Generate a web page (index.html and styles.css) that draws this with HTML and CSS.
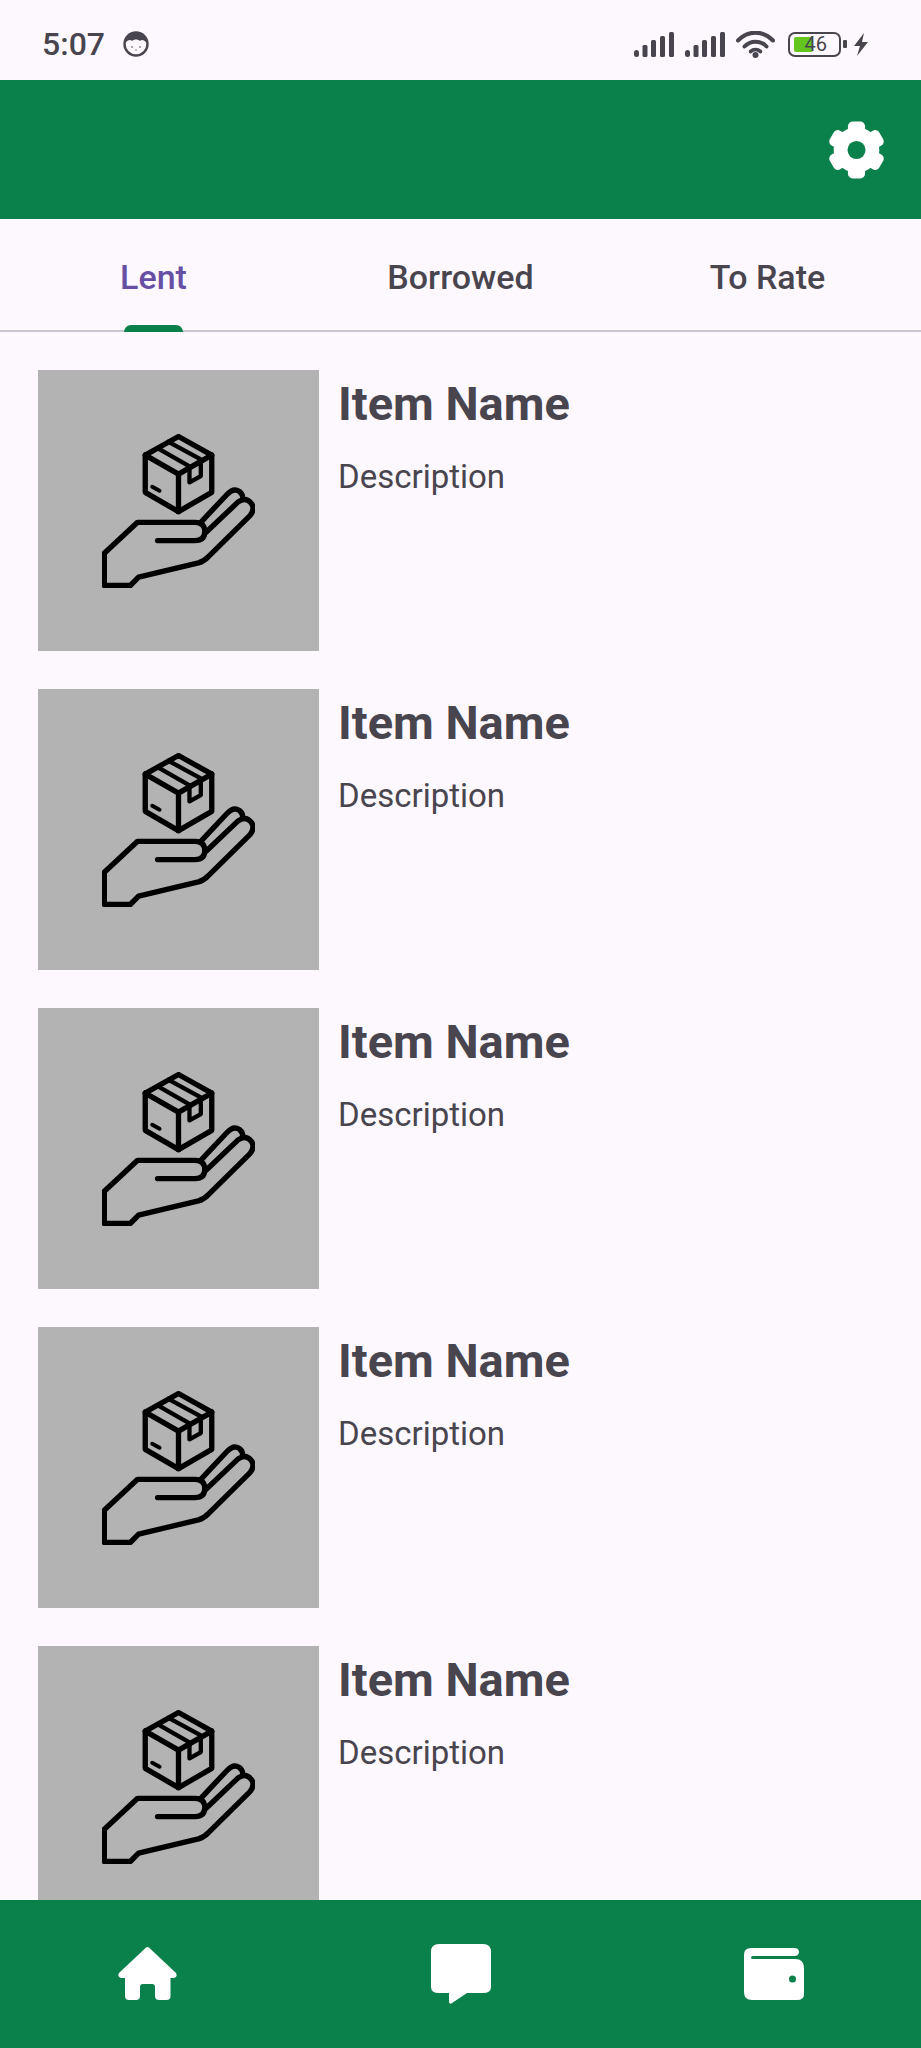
FILE: index.html
```html
<!DOCTYPE html>
<html lang="en">
<head>
<meta charset="utf-8">
<title>Items</title>
<link rel="stylesheet" href="styles.css">
</head>
<body>
<svg class="defs" width="0" height="0" aria-hidden="true">
  <defs>
    <symbol id="lend" viewBox="65 40 460 462">
      <g fill="none" stroke="#000" stroke-width="16" stroke-linejoin="round" stroke-linecap="round">
        <path d="M295 47L395 103V215L295 273L195 215V103Z"/>
        <path d="M195 103L295 160L395 103M295 160V273"/>
        <path d="M232 82L328 137V185L362 166V116L265 63" stroke-width="13"/>
        <path d="M216 198L238 210" stroke-width="12"/>
        <path d="M232 360H345Q374 360 374 333Q374 305 345 305H172L72 398V495H150L175 470L355 427Q372 422 385 408L510 285Q526 265 514 248Q498 228 475 243L378 335"/>
        <path d="M362 305L440 222Q460 200 478 212Q490 222 488 236"/>
      </g>
    </symbol>
    <symbol id="bars" viewBox="0 0 40 25">
      <rect x="0" y="18" width="5" height="7" rx="2.5"/>
      <rect x="8.5" y="13" width="5" height="12" rx="1.5"/>
      <rect x="17" y="8" width="5" height="17" rx="1.5"/>
      <rect x="26" y="4" width="5" height="21" rx="1.5"/>
      <rect x="35" y="0" width="5" height="25" rx="1.5"/>
    </symbol>
  </defs>
</svg>

<div class="phone">
  <header class="status">
    <div class="status-left">
      <span class="time">5:07</span>
      <svg class="face" viewBox="0 0 26 26">
        <circle cx="13" cy="13" r="11.5" fill="#fdf8fd" stroke="#49454f" stroke-width="2.4"/>
        <path d="M2 12C3 4 8 1 13 1S23 4 24 12C21 9 19 8 17 10C15 8 11 8 9 10C7 8 5 9 2 12Z" fill="#49454f"/>
        <circle cx="9" cy="16" r="1" fill="#8b8790"/>
        <circle cx="17" cy="16" r="1" fill="#8b8790"/>
        <circle cx="13" cy="19" r="1" fill="#b0adb4"/>
      </svg>
    </div>
    <div class="status-right">
      <svg class="signal"><use href="#bars"/></svg>
      <svg class="signal"><use href="#bars"/></svg>
      <svg class="wifi" viewBox="0 0 39 27">
        <path d="M2 9.5C12-1 27-1 37 9.5" fill="none" stroke="#49454f" stroke-width="4" stroke-linecap="round"/>
        <path d="M8.5 15.5C14.500 9 24.500 9 30.500 15.500" fill="none" stroke="#49454f" stroke-width="4" stroke-linecap="round"/>
        <path d="M14.500 20.500C17.500 18 21.500 18 24.500 20.500" fill="none" stroke="#49454f" stroke-width="3.600" stroke-linecap="round"/>
        <circle cx="19.500" cy="24" r="3" fill="#49454f"/>
      </svg>
      <div class="battery">
        <span class="battery-level"></span>
        <span class="battery-text">46</span>
      </div>
      <span class="battery-nub"></span>
      <svg class="bolt" viewBox="0 0 16 23"><path d="M11 0L1 13H7L4 23L15 9H9Z" fill="#49454f"/></svg>
    </div>
  </header>

  <div class="appbar">
    <svg class="gear" viewBox="0 0 60 60">
      <g fill="#fff">
        <circle cx="30" cy="30" r="24"/>
        <rect x="21" y="0" width="18" height="60" rx="5"/>
        <rect x="21" y="0" width="18" height="60" rx="5" transform="rotate(60 30 30)"/>
        <rect x="21" y="0" width="18" height="60" rx="5" transform="rotate(120 30 30)"/>
      </g>
      <circle cx="30" cy="30" r="9.500" fill="#0a804a"/>
    </svg>
  </div>

  <nav class="tabs">
    <div class="tab tab-active">Lent<span class="indicator"></span></div>
    <div class="tab">Borrowed</div>
    <div class="tab">To Rate</div>
  </nav>

  <main class="list">
    <article class="item">
      <div class="thumb"><svg class="lend"><use href="#lend"/></svg></div>
      <div class="info"><h2 class="name">Item Name</h2><p class="desc">Description</p></div>
    </article>
    <article class="item">
      <div class="thumb"><svg class="lend"><use href="#lend"/></svg></div>
      <div class="info"><h2 class="name">Item Name</h2><p class="desc">Description</p></div>
    </article>
    <article class="item">
      <div class="thumb"><svg class="lend"><use href="#lend"/></svg></div>
      <div class="info"><h2 class="name">Item Name</h2><p class="desc">Description</p></div>
    </article>
    <article class="item">
      <div class="thumb"><svg class="lend"><use href="#lend"/></svg></div>
      <div class="info"><h2 class="name">Item Name</h2><p class="desc">Description</p></div>
    </article>
    <article class="item">
      <div class="thumb"><svg class="lend"><use href="#lend"/></svg></div>
      <div class="info"><h2 class="name">Item Name</h2><p class="desc">Description</p></div>
    </article>
  </main>

  <footer class="bottomnav">
    <svg class="navicon" viewBox="0 0 60 60">
      <path fill="#fff" d="M29.500 3Q31 3 32.500 5L58 29Q60 33 56 34H52.500V52Q52.500 56 48.500 56H41Q37 56 37 52V43Q37 40 34 40H25Q22 40 22 43V52Q22 56 18 56H11Q7 56 7 52V34H3Q-1 33 1 29L26.500 5Q28 3 29.500 3Z"/>
    </svg>
    <svg class="navicon" viewBox="0 0 60 60">
      <path fill="#fff" d="M8 0H52Q60 0 60 8V43Q60 49 52 49H36L21 59Q18 61 18 57V49H8Q0 49 0 43V8Q0 0 8 0Z"/>
    </svg>
    <svg class="navicon" viewBox="0 0 60 60">
      <path fill="#fff" fill-rule="evenodd" d="M7 4H50Q55 4 55 8Q55 12 50 12H9Q7 12 7 13.500Q7 15 9 15H51Q60 15 60 24V50Q60 56 53 56H8Q0 56 0 48V11Q0 4 7 4ZM48.500 31.500Q45 31.500 45 35Q45 38.500 48.500 38.500Q52 38.500 52 35Q52 31.500 48.500 31.500Z"/>
    </svg>
  </footer>
</div>
</body>
</html>
```

FILE: styles.css
```css
* { box-sizing: border-box; }

html, body {
  margin: 0;
  padding: 0;
  background: #fdf8fe;
}

.defs { position: absolute; }

.phone {
  width: 921px;
  height: 2048px;
  display: flex;
  flex-direction: column;
  overflow: hidden;
  font-family: Roboto, "Liberation Sans", sans-serif;
  color: #49454f;
  background: #fdf8fe;
}

/* status bar */
.status {
  flex: 0 0 80px;
  display: flex;
  justify-content: space-between;
  align-items: center;
  padding: 8px 52px 0 42px;
}

.status-left {
  display: flex;
  align-items: center;
  gap: 18px;
}

.time {
  font-size: 32px;
  font-weight: 500;
  line-height: 36px;
}

.face { width: 26px; height: 26px; }

.status-right {
  display: flex;
  align-items: center;
}

.signal {
  width: 40px;
  height: 25px;
  fill: #49454f;
  margin-right: 11px;
}

.wifi {
  width: 39px;
  height: 27px;
  margin-right: 13px;
}

.battery {
  position: relative;
  width: 53px;
  height: 25px;
  border: 2.500px solid #49454f;
  border-radius: 7px;
  display: flex;
  align-items: center;
  justify-content: flex-end;
  padding-right: 12px;
}

.battery-level {
  position: absolute;
  left: 4px;
  top: 3px;
  bottom: 3px;
  width: 19px;
  background: #64c51f;
  border-radius: 2px;
}

.battery-text {
  position: relative;
  font-size: 20px;
  line-height: 20px;
}

.battery-nub {
  width: 4px;
  height: 8px;
  margin: 0 6px 0 2px;
  background: #49454f;
  border-radius: 1px;
}

.bolt { width: 16px; height: 23px; }

/* app bar */
.appbar {
  flex: 0 0 139px;
  background: #0a804a;
  display: flex;
  align-items: center;
  justify-content: flex-end;
  padding: 0 36px 0 0;
}

.gear { width: 57px; height: 60px; }

/* tabs */
.tabs {
  flex: 0 0 113px;
  display: grid;
  grid-template-columns: repeat(3, 1fr);
  border-bottom: 2px solid #cac4d0;
}

.tab {
  position: relative;
  display: flex;
  align-items: center;
  justify-content: center;
  font-size: 34px;
  font-weight: 500;
  padding-top: 4px;
}

.tab-active { color: #6750a4; }

.indicator {
  position: absolute;
  left: 124px;
  bottom: -2px;
  width: 59px;
  height: 7px;
  background: #0a804a;
  border-radius: 7px 7px 0 0;
}

/* list */
.list {
  flex: 1 1 0;
  min-height: 0;
  overflow: hidden;
  display: flex;
  flex-direction: column;
  gap: 38px;
  padding: 38px 38px 0;
}

.item {
  flex: 0 0 281px;
  display: flex;
  gap: 19px;
}

.thumb {
  width: 281px;
  height: 281px;
  background: #b3b3b3;
  display: flex;
  align-items: center;
  justify-content: center;
}

.lend { width: 153px; height: 154px; }

.info { padding-top: 8px; }

.name {
  margin: 0;
  font-size: 47px;
  line-height: 52px;
  font-weight: 700;
}

.desc {
  margin: 28px 0 0;
  font-size: 33px;
  line-height: 38px;
}

/* bottom nav */
.bottomnav {
  flex: 0 0 148px;
  background: #0a804a;
  display: flex;
  justify-content: space-between;
  align-items: center;
  padding: 0 117px 0 118px;
}

.navicon { width: 60px; height: 60px; }
```
